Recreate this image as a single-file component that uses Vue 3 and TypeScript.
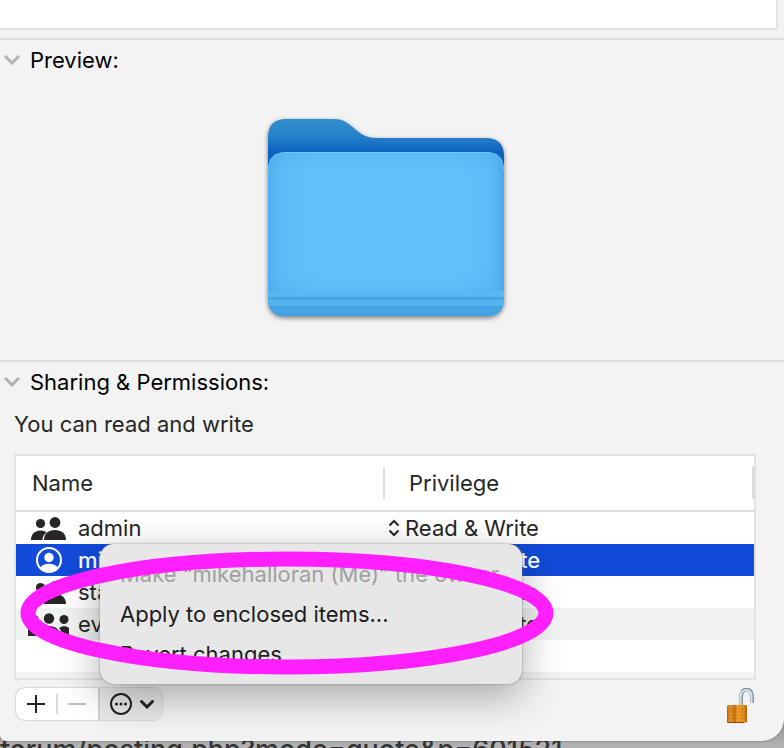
<script setup lang="ts">
import { ref } from 'vue'

type IconKind = 'group' | 'person' | 'crowd'

interface Entry {
  name: string
  icon: IconKind
  privilege: string
}

const privileges = ['Read & Write', 'Read only', 'Write only', 'No Access']

const entries = ref<Entry[]>([
  { name: 'admin', icon: 'group', privilege: 'Read & Write' },
  { name: 'mikehalloran (Me)', icon: 'person', privilege: 'Read & Write' },
  { name: 'staff', icon: 'group', privilege: 'Read & Write' },
  { name: 'everyone', icon: 'crowd', privilege: 'Read & Write' },
])

const selected = ref(1)
const comment = ref('')
</script>

<template>
  <div class="desktop">
    <main class="window">
      <textarea v-model="comment" class="comments" aria-label="Comments"></textarea>

      <section class="section preview">
        <h2 class="heading">
          <button class="disclosure" type="button" aria-label="Toggle preview">
            <svg width="16" height="10" viewBox="0 0 16 10"><path d="M1 1L8 8L15 1" /></svg>
          </button>
          Preview:
        </h2>
        <div class="artwork">
          <svg width="260" height="226" viewBox="256 106 260 226" role="img" aria-label="Folder">
            <defs>
              <linearGradient id="back" x1="0" y1="119" x2="0" y2="153" gradientUnits="userSpaceOnUse">
                <stop offset="0" stop-color="#328dcb" />
                <stop offset=".45" stop-color="#2885ca" />
                <stop offset="1" stop-color="#0b60bf" />
              </linearGradient>
              <linearGradient id="front" x1="268" y1="0" x2="504" y2="0" gradientUnits="userSpaceOnUse">
                <stop offset="0" stop-color="#4eb0ee" />
                <stop offset=".03" stop-color="#57b8f4" />
                <stop offset=".08" stop-color="#5dbef8" />
                <stop offset=".2" stop-color="#61c2fb" />
                <stop offset=".8" stop-color="#61c2fb" />
                <stop offset=".93" stop-color="#5dbdf8" />
                <stop offset=".97" stop-color="#56b6f2" />
                <stop offset="1" stop-color="#4aaae8" />
              </linearGradient>
              <linearGradient id="shade" x1="0" y1="152" x2="0" y2="291" gradientUnits="userSpaceOnUse">
                <stop offset="0" stop-color="#409fe0" stop-opacity=".25" />
                <stop offset=".16" stop-color="#409fe0" stop-opacity="0" />
                <stop offset=".85" stop-color="#409fe0" stop-opacity="0" />
                <stop offset="1" stop-color="#409fe0" stop-opacity=".2" />
              </linearGradient>
              <linearGradient id="base" x1="0" y1="306" x2="0" y2="316" gradientUnits="userSpaceOnUse">
                <stop offset="0" stop-color="#46a6e5" />
                <stop offset="1" stop-color="#3fa0e1" />
              </linearGradient>
              <clipPath id="front-clip">
                <path d="M268 171C268 158 274 152 287 152H485C498 152 504 158 504 171V298C504 310 498 316 486 316H286C274 316 268 310 268 298Z" />
              </clipPath>
              <filter id="drop" x="-10%" y="-10%" width="120%" height="120%">
                <feDropShadow dx="0" dy="2" stdDeviation="2.500" flood-color="#000" flood-opacity=".5" />
              </filter>
            </defs>
            <path
              filter="url(#drop)"
              fill="url(#back)"
              d="M268 137C268 125 274 119 286 119H335C343 119 348 123 355 129C362 135 367 138 378 138H486C498 138 504 144 504 156V298C504 310 498 316 486 316H286C274 316 268 310 268 298Z"
            />
            <g clip-path="url(#front-clip)">
              <rect x="268" y="152" width="236" height="164" fill="url(#front)" />
              <rect x="268" y="152" width="236" height="139" fill="url(#shade)" />
              <rect x="268" y="291" width="236" height="6" fill="#58b8f3" />
              <rect x="268" y="297" width="236" height="3" fill="#48a9e7" />
              <rect x="268" y="300" width="236" height="6" fill="#54b4f0" />
              <rect x="268" y="306" width="236" height="10" fill="url(#base)" />
              <path d="M268 297.500H504M268 306.500H504" stroke="#3e9cda" stroke-opacity=".8" />
            </g>
            <path d="M268.500 171C268.500 158 274 152.500 287 152.500H485C498 152.500 503.500 158 503.500 171" fill="none" stroke="#7fd0ff" stroke-opacity=".6" />
          </svg>
        </div>
      </section>

      <section class="section sharing">
        <h2 class="heading">
          <button class="disclosure" type="button" aria-label="Toggle sharing and permissions">
            <svg width="16" height="10" viewBox="0 0 16 10"><path d="M1 1L8 8L15 1" /></svg>
          </button>
          Sharing &amp; Permissions:
        </h2>
        <p class="summary">You can read and write</p>

        <div class="permissions">
          <div class="list">
            <table>
              <thead>
                <tr>
                  <th class="name-col"><span>Name</span></th>
                  <th class="privilege-col"><span>Privilege</span></th>
                </tr>
              </thead>
              <tbody>
                <tr
                  v-for="(entry, index) in entries"
                  :key="entry.name"
                  :class="{ selected: index === selected }"
                  @click="selected = index"
                >
                  <td>
                    <div class="who">
                      <svg v-if="entry.icon === 'group'" width="42" height="32" viewBox="0 0 42 32">
                        <circle cx="12.500" cy="11.500" r="4.600" />
                        <path d="M3 28C3 22 7 18.500 12.500 18.500C15 18.500 17 19.200 18.500 20.300C16 22.300 14.500 25 14.500 28Z" />
                        <circle cx="27" cy="10.500" r="5.400" />
                        <path d="M16 28C16 21.500 20.500 18 27 18C33.500 18 38 21.500 38 28Z" />
                      </svg>
                      <svg v-else-if="entry.icon === 'person'" width="42" height="32" viewBox="0 0 42 32">
                        <circle class="ring" cx="21" cy="16" r="12" />
                        <circle cx="21" cy="13.500" r="4.700" />
                        <path d="M12 24C14 21 17 19.800 21 19.800C25 19.800 28 21 30 24C25 29.500 17 29.500 12 24Z" />
                      </svg>
                      <svg v-else width="42" height="32" viewBox="0 0 42 32">
                        <circle cx="6" cy="11.500" r="4.500" />
                        <path d="M0 28V20C4 17.500 8 18 11 20C9 22 8 25 8 28Z" />
                        <circle cx="21" cy="10.500" r="5.200" />
                        <path d="M10 28C10 21.500 14.500 18 21 18C27.500 18 32 21.500 32 28Z" />
                        <circle cx="36" cy="11.500" r="4.500" />
                        <path d="M34 28C34 25 33 22 31 20C34 18 38 17.500 41 20V28Z" />
                      </svg>
                      {{ entry.name }}
                    </div>
                  </td>
                  <td>
                    <label class="choice">
                      <svg width="12" height="18" viewBox="0 0 12 18">
                        <path d="M1.500 6.500L6 2L10.500 6.500M1.500 11.500L6 16L10.500 11.500" />
                      </svg>
                      <select v-model="entry.privilege" :aria-label="`Privilege for ${entry.name}`">
                        <option v-for="option in privileges" :key="option">{{ option }}</option>
                      </select>
                    </label>
                  </td>
                </tr>
              </tbody>
            </table>
            <div class="empty-row"></div>
            <div class="empty-row stripe"></div>
          </div>

          <div class="toolbar">
            <div class="buttons">
              <button class="tool add" type="button" aria-label="Add">
                <svg width="18" height="18" viewBox="0 0 18 18"><path d="M9 0V18M0 9H18" /></svg>
              </button>
              <button class="tool remove" type="button" aria-label="Remove" disabled>
                <svg width="18" height="18" viewBox="0 0 18 18"><path d="M0 9H18" /></svg>
              </button>
              <button class="tool actions" type="button" aria-label="Actions" aria-haspopup="menu">
                <svg width="48" height="24" viewBox="0 0 48 24">
                  <circle class="outline" cx="14" cy="12" r="10" />
                  <circle cx="9.500" cy="12" r="1.500" />
                  <circle cx="14" cy="12" r="1.500" />
                  <circle cx="18.500" cy="12" r="1.500" />
                  <path class="arrow" d="M34.500 9.500L40 15L45.500 9.500" />
                </svg>
              </button>
            </div>
            <button class="lock" type="button" aria-label="Lock settings">
              <svg width="30" height="38" viewBox="0 0 30 38">
                <defs>
                  <linearGradient id="brass" x1="0" x2="1">
                    <stop offset="0" stop-color="#a75a10" />
                    <stop offset=".14" stop-color="#eb9a2b" />
                    <stop offset=".4" stop-color="#c46c0d" />
                    <stop offset=".52" stop-color="#f0a22f" />
                    <stop offset=".85" stop-color="#e68b18" />
                    <stop offset="1" stop-color="#a95c0c" />
                  </linearGradient>
                </defs>
                <path d="M15 19V9C15 -1 26 -0.500 26 8V15" fill="none" stroke="#8796a3" stroke-width="4" />
                <path d="M14.500 19V9C14.500 0 25.500 0 25.500 8V15" fill="none" stroke="#dce5ed" stroke-width="2" />
                <path d="M1 18L3 17H20L21 18V34L18 35H2L1 34Z" fill="url(#brass)" />
                <path d="M2 21H20M2 24H20M2 27H20M2 30H20" stroke="#a85b0b" stroke-opacity=".35" />
                <path d="M1.500 34.500H18" stroke="#9b3d16" />
              </svg>
            </button>
          </div>

          <div class="menu" role="menu">
            <button type="button" role="menuitem" disabled>Make “mikehalloran (Me)” the owner</button>
            <button type="button" role="menuitem">Apply to enclosed items...</button>
            <button type="button" role="menuitem">Revert changes</button>
          </div>

          <svg class="marker" width="536" height="126" viewBox="0 0 536 126" aria-hidden="true">
            <ellipse cx="268" cy="63" rx="259" ry="54" />
          </svg>
        </div>
      </section>
    </main>

    <div class="address">forum/posting.php?mode=quote&amp;p=601521</div>
  </div>
</template>

<style>
body {
  margin: 0;
  overflow: hidden;
}
</style>

<style scoped>
* {
  box-sizing: border-box;
}

.desktop {
  display: flex;
  flex-direction: column;
  height: 100vh;
  overflow: hidden;
  background: linear-gradient(#8f8f8f, #b4b4b4) bottom / 100% 30px no-repeat #999;
  color: #262626;
  font-family: Inter, "Liberation Sans", sans-serif;
  font-size: 22px;
  line-height: 32px;
}

button,
select,
textarea {
  margin: 0;
  padding: 0;
  border: 0;
  background: none;
  color: inherit;
  font: inherit;
}

.window {
  flex: none;
  padding-bottom: 17px;
  border-radius: 0 0 22px 6px;
  background: #f3f3f3;
  box-shadow: 0 0 2px #555;
}

.comments {
  display: block;
  width: calc(100% - 6px);
  height: 30px;
  margin-bottom: 8px;
  border: solid #e2e2e2;
  border-width: 0 2px 2px 0;
  background: #fff;
  resize: none;
}

.section {
  border-top: 2px solid #dcdcdc;
}

.heading {
  display: flex;
  align-items: center;
  gap: 10px;
  height: 40px;
  margin: 0;
  padding-left: 4px;
  color: #000;
  font-size: 22px;
  font-weight: 400;
}

.disclosure {
  display: flex;
}

.disclosure path {
  fill: none;
  stroke: #b1b1b1;
  stroke-width: 3;
}

.artwork {
  display: flex;
  justify-content: center;
  padding: 26px 12px 28px 0;
}

.summary {
  margin: 6px 0 14px 14px;
}

.permissions {
  position: relative;
  margin: 0 28px 0 14px;
}

.list {
  border: 2px solid #e2e2e2;
  background: #fff;
}

table {
  width: 100%;
  border-collapse: separate;
  border-spacing: 0;
  table-layout: fixed;
}

th {
  height: 56px;
  padding: 0;
  border-bottom: 2px solid #dedede;
  font-weight: 400;
  text-align: left;
}

th span {
  display: block;
  border-right: 2px solid #dcdcdc;
}

.name-col {
  width: 50%;
}

.name-col span {
  padding-left: 16px;
}

.privilege-col span {
  padding-left: 24px;
}

td {
  height: 32px;
  padding: 0;
}

tbody tr:nth-child(even) {
  background: #f0f3f2;
}

tbody tr.selected {
  background: #124bd9;
  color: #fff;
  font-weight: 500;
}

.who {
  display: flex;
  gap: 8px;
  height: 32px;
  padding-left: 12px;
}

.who svg {
  fill: currentColor;
}

.who .ring {
  fill: none;
  stroke: currentColor;
  stroke-width: 2;
}

.choice {
  display: flex;
  align-items: center;
  gap: 5px;
  height: 32px;
  padding-left: 3px;
}

.choice path {
  fill: none;
  stroke: currentColor;
  stroke-width: 2;
}

.choice select {
  height: 32px;
  appearance: none;
}

.empty-row {
  height: 32px;
}

.empty-row.stripe {
  height: 6px;
  background: #f0f3f2;
}

.toolbar {
  display: flex;
  align-items: flex-start;
  justify-content: space-between;
  height: 44px;
  padding: 8px 0 0 2px;
}

.buttons {
  display: flex;
  height: 32px;
  overflow: hidden;
  border-radius: 9px;
  background: #fff;
  box-shadow: 0 0 2px #999;
}

.tool {
  display: flex;
  align-items: center;
  justify-content: center;
  width: 40px;
  stroke: #222;
  stroke-width: 2;
}

.tool.remove {
  position: relative;
  width: 42px;
  stroke: #c0c0c0;
}

.tool.remove::before {
  content: "";
  position: absolute;
  top: 6px;
  left: 0;
  width: 2px;
  height: 20px;
  background: #dcdcdc;
}

.tool.actions {
  width: 64px;
  border-left: 2px solid #d0d0d0;
  background: #e9e9e9;
  fill: #222;
  stroke: none;
}

.actions .outline {
  fill: none;
  stroke: #222;
  stroke-width: 2;
}

.actions .arrow {
  fill: none;
  stroke: #222;
  stroke-linecap: round;
  stroke-width: 3;
}

.lock {
  display: flex;
}

.menu {
  position: absolute;
  top: 90px;
  left: 86px;
  display: flex;
  flex-direction: column;
  gap: 8px;
  width: 422px;
  height: 140px;
  padding: 14px 20px;
  border-radius: 14px;
  background: #e7e7e7;
  box-shadow: 0 0 2px #777, 0 12px 40px rgb(0 0 0 / 32%);
  color: #1c1c1c;
  white-space: nowrap;
}

.menu button {
  height: 32px;
  text-align: left;
}

.menu button:disabled {
  color: #a0a0a0;
}

.marker {
  position: absolute;
  top: 96px;
  left: 5px;
  pointer-events: none;
}

.marker ellipse {
  fill: none;
  stroke: #ff1fff;
  stroke-width: 15;
}

.address {
  flex: 1;
  min-height: 0;
  overflow: hidden;
  color: #333;
  font-size: 27px;
  font-weight: 500;
  line-height: 18px;
  white-space: nowrap;
}
</style>
